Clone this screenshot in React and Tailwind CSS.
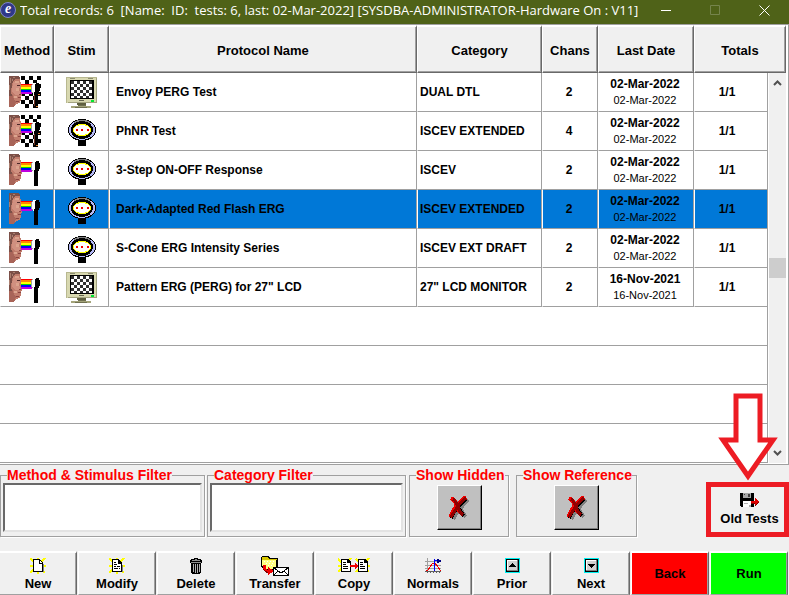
import { useState } from 'react';
import clsx from 'clsx';

const tests = [
	{ name: 'Envoy PERG Test', category: 'DUAL DTL', chans: 2, date: '02-Mar-2022', method: 'pattern', stim: 'monitor' },
	{ name: 'PhNR Test', category: 'ISCEV EXTENDED', chans: 4, date: '02-Mar-2022', method: 'pattern', stim: 'ganzfeld' },
	{ name: '3-Step ON-OFF Response', category: 'ISCEV', chans: 2, date: '02-Mar-2022', method: 'flash', stim: 'ganzfeld' },
	{ name: 'Dark-Adapted Red Flash ERG', category: 'ISCEV EXTENDED', chans: 2, date: '02-Mar-2022', method: 'flash', stim: 'ganzfeld' },
	{ name: 'S-Cone ERG Intensity Series', category: 'ISCEV EXT DRAFT', chans: 2, date: '02-Mar-2022', method: 'flash', stim: 'ganzfeld' },
	{ name: 'Pattern ERG (PERG) for 27" LCD', category: '27" LCD MONITOR', chans: 2, date: '16-Nov-2021', method: 'flash', stim: 'monitor' },
];

const emptyRows = [ 0, 1, 2, 3 ];
const rainbow = [ '#ff0000', '#ff8800', '#ffff00', '#00d800', '#0000ff', '#c000e0' ];

// Black squares of a checkerboard as one path.
function checks( x0, y0, cols, rows, size ) {
	let d = '';
	for ( let r = 0; r < rows; r++ ) {
		for ( let c = 0; c < cols; c++ ) {
			if ( ( r + c ) % 2 === 0 ) d += `M${ x0 + c * size } ${ y0 + r * size }h${ size }v${ size }h-${ size }z`;
		}
	}
	return d;
}

function MethodIcon( { type } ) {
	return (
		<svg width="33" height="32" viewBox="0 0 33 32" shapeRendering="crispEdges" role="img" aria-label={ type }>
			{ type === 'pattern' && (
				<>
					<path d="M8 0h24v32H8z" fill="#fff" />
					<path d={ checks( 12, 0, 5, 8, 4 ) } fill="#000" />
				</>
			) }
			<path d="M0 0h10l1 3 1 5v5l1 4v2l-1 1v4l-1 3-4 1-2 3H0z" fill="#c07c6c" />
			<path d="M4 6h6l1 2v4H7v3h4v4H6l-3-4z" fill="#d09080" />
			<path d="M6 5h4v2H6zM7 12h3v3H7zM5 20h3v2H5z" fill="#dca48e" />
			<path d="M0 18h3l2 5 2 3-2 5H0z" fill="#a86458" />
			<path d="M0 0h9l2 2v1H7L4 5 3 9l-1 6 1 5H0z" fill="#7c5048" />
			<path d="M1 2h1v5H1zM4 1h2v1H4zM0 9h1v5H0zM3 3h1v2H3z" fill="#ac8070" />
			<path d="M8 9h3v1H8z" fill="#4c2828" />
			<path d="M9 21h3v1H9zM7 25h3v1H7zM10 18h2v1h-2z" fill="#8c4440" />
			{ rainbow.map( ( color, i ) => (
				<path key={ color } d={ `M12 ${ 8 + Math.floor( i * 1.7 ) }h11v2H12z` } fill={ color } />
			) ) }
			<path d="M25 7h4l1 1 1 2v4l-1 2-1 1v15h-4z" fill="#000" />
			<path d="M22 9l2-2h3l-1 3v4l-1 4h-1l-2-2z" fill="#fff" />
			<path d="M22 9h1v7h-1zM23 8h1v1h-1zM23 16h1v1h-1z" fill="#a0a0a0" />
			{ type === 'pattern' && <path d="M29 18h2v1h-2zM27 30h2v1h-2z" fill="#e08030" /> }
			{ type === 'pattern' && <path d="M25 19h1v11h-1z" fill="#703020" /> }
		</svg>
	);
}

function MonitorIcon() {
	return (
		<svg width="31" height="31" viewBox="0 0 31 31" shapeRendering="crispEdges" role="img" aria-label="monitor">
			<path d="M0 0h31v26H0z" fill="#d8d8b0" />
			<path d="M0 0h31v1H1v25H0z" fill="#b8b890" />
			<path d="M30 1h1v25H2v-1h28z" fill="#a4a480" />
			<path d="M4 1h5v1H4zM22 1h5v1h-5z" fill="#8c8c70" />
			<path d="M4 3h24v19H4z" fill="#000" />
			<path d="M5 4h22v17H5z" fill="#fff" />
			<path d={ checks( 5, 4, 7, 6, 3 ) } fill="#303030" />
			<path d="M26 3h2v19H4v-1h22z" fill="#000" />
			<path d="M13 23h5v1h-5z" fill="#666650" />
			<path d="M25 23h3v2h-3z" fill="#00e830" />
			<path d="M11 26h9v2h-9z" fill="#606040" />
			<path d="M13 28h6v1h-6zM5 29h20v2H5z" fill="#a4a47a" />
			<path d="M12 28h8v1h-8zM9 30h12v1H9z" fill="#707050" />
		</svg>
	);
}

function GanzfeldIcon() {
	return (
		<svg width="28" height="28" viewBox="0 0 28 28" shapeRendering="crispEdges" role="img" aria-label="ganzfeld">
			<path d="M10 21h8v7h-8z" fill="#000" />
			<ellipse cx="14" cy="12" rx="14" ry="11" fill="#000" />
			<ellipse cx="14" cy="12" rx="13" ry="10" fill="#b4b8f4" />
			<path d="M6 4l4-2h8l4 2v1H6z" fill="#808080" />
			<ellipse cx="14" cy="12" rx="11" ry="9" fill="#000" />
			<ellipse cx="14" cy="12" rx="9" ry="6" fill="#ffff00" />
			<ellipse cx="14" cy="12" rx="8" ry="5" fill="#fff" />
			<path d="M8 11h2v2H8zM13 11h2v2h-2zM19 11h2v2h-2z" fill="#f00000" />
		</svg>
	);
}

function NewIcon() {
	return (
		<svg width="16" height="16" viewBox="0 0 16 16" shapeRendering="crispEdges">
			<path d="M0 0l15 15M15 0L0 15M0 8h16M8 0v16" stroke="#ffff00" strokeWidth="2" />
			<path d="M5 14h9V6h-1v7H5z" fill="#808080" />
			<path d="M3 1h7l3 4v9H3z" fill="#000" />
			<path d="M4 2h5v4h3v7H4z" fill="#fff" />
			<path d="M10 3v2h2z" fill="#fff" />
		</svg>
	);
}

function ModifyIcon() {
	return (
		<svg width="16" height="16" viewBox="0 0 16 16" shapeRendering="crispEdges">
			<path d="M0 0l15 15M15 0L0 15M0 8h16M8 0v16" stroke="#ffff00" strokeWidth="2" />
			<path d="M3 1h7l3 4v9H3z" fill="#000" />
			<path d="M4 2h5v4h3v7H4z" fill="#fff" />
			<path d="M5 4h2v1H5zM5 6h3v1H5zM5 8h2v1H5zM8 8h3v1H8zM5 10h4v1H5zM10 10h1v1h-1z" fill="#000" />
			<path d="M5 14h9V7h-1v7z" fill="#808080" />
		</svg>
	);
}

function DeleteIcon() {
	return (
		<svg width="14" height="16" viewBox="0 0 14 16" shapeRendering="crispEdges">
			<path d="M5 0h4v1h3v1h1v3h-1v10h-1v1H3v-1H2V5H1V2h1V1h3z" fill="#000" />
			<path d="M3 2h8v1H3zM2 4h10v1H2zM6 1h2v1H6z" fill="#909090" />
			<path d="M4 6h1v8H4zM6 6h1v9H6zM8 6h1v9H8zM10 6h1v8h-1z" fill="#b0b0b0" />
		</svg>
	);
}

function TransferIcon() {
	return (
		<svg width="28" height="20" viewBox="0 0 28 20" shapeRendering="crispEdges">
			<path d="M1 0h6l2 2h8v12H3L0 11V1z" fill="#000" />
			<path d="M1 1h5l2 2h8v1H1z" fill="#d8c800" />
			<path d="M1 4h14v9H4l-3-3z" fill="#ffff80" />
			<path d="M3 5h1v1H3zM6 5h1v1H6zM9 5h1v1H9zM12 5h1v1h-1zM5 7h1v1H5zM8 7h1v1H8zM11 7h1v1h-1zM7 9h1v1H7zM10 9h1v1h-1z" fill="#fff" />
			<path d="M2 9h3v4l2 1V11l6 4-6 4v-3l-3-1-2-3z" fill="#f00000" />
			<path d="M2 12v2l3 3h2v-1l-3-1z" fill="#800000" />
			<path d="M12 11h16v9H12z" fill="#000" />
			<path d="M13 12h14v7H13z" fill="#fff" />
			<path d="M13 12l7 5 7-5M13 19l4-4M27 19l-4-4" stroke="#000" fill="none" />
		</svg>
	);
}

function CopyIcon() {
	return (
		<svg width="32" height="16" viewBox="0 0 32 16" shapeRendering="crispEdges">
			<path d="M0 1l13 13M13 0L0 14M0 8h12M18 1l13 13M31 0L18 14M20 8h12" stroke="#ffff00" strokeWidth="2" />
			<path d="M3 1h7l3 3v10H3zM20 1h7l3 3v10H20z" fill="#000" />
			<path d="M4 2h5v3h3v8H4zM21 2h5v3h3v8h-8z" fill="#fff" />
			<path d="M5 4h3v1H5zM5 6h3v1H5zM5 8h5v1H5zM5 10h5v1H5zM22 4h3v1h-3zM22 6h3v1h-3zM22 8h5v1h-5zM22 10h5v1h-5z" fill="#000" />
			<path d="M12 7h5V5l4 3-4 3V9h-5z" fill="#f00000" />
		</svg>
	);
}

function NormalsIcon() {
	return (
		<svg width="17" height="16" viewBox="0 0 17 16" shapeRendering="crispEdges">
			<path d="M2 0h1v14H2zM0 3h16v1H0zM0 7h16v1H0zM0 10h16v1H0z" fill="#a0a0a0" />
			<path d="M0 13h16v1H0zM2 14h1v1H2zM5 14h1v1H5zM8 14h1v1H8zM11 14h1v1h-1zM14 14h1v1h-1z" fill="#606060" />
			<path d="M1 12h2l2-3 3-4h2l3 4 2 3h1" stroke="#f00000" strokeWidth="1" fill="none" />
			<path d="M9 1h1v12H9zM9 2h3v1H9z" fill="#0000ff" />
			<path d="M12 1h2v1h2v2h-2v1h-2z" fill="#000080" />
		</svg>
	);
}

function StepIcon( { down } ) {
	return (
		<svg width="15" height="15" viewBox="0 0 15 15" shapeRendering="crispEdges">
			<path d="M0 0h15v15H0z" fill="#00f0f0" />
			<path d="M1 1h13v13H1z" fill="#000" />
			<path d="M2 2h11v11H2z" fill="#808080" />
			<path d="M2 2h10v10H2z" fill="#fff" />
			<path d="M3 3h9v9H3z" fill="#d0d0d0" />
			<path d={ down ? 'M4 6h7v1h-1v1H9v1H8v1H7V9H6V8H5V7H4z' : 'M7 5h1v1h1v1h1v1h1v1H4V8h1V7h1V6h1z' } fill="#000" />
		</svg>
	);
}

function DiskIcon() {
	return (
		<svg width="19" height="14" viewBox="0 0 19 14" shapeRendering="crispEdges">
			<path d="M0 0h14v14H1l-1-1z" fill="#000" />
			<path d="M3 0h8v5H3z" fill="#a8a8a8" />
			<path d="M8 1h2v3H8zM4 1h1v1H4z" fill="#404040" />
			<path d="M3 8h8v6H3z" fill="#fff" />
			<path d="M4 10h4v1H4zM9 12h2v2H9z" fill="#b0b0b0" />
			<path d="M11 8h4V5l4 4-4 4v-3h-4z" fill="#e00000" />
			<path d="M11 10h4v1h-4zM15 12l3-3h1l-4 4z" fill="#800000" />
		</svg>
	);
}

function CrossIcon() {
	return (
		<svg width="22" height="25" viewBox="0 0 22 25" shapeRendering="crispEdges" fill="none" strokeLinejoin="round">
			<path d="M6 5q4 3 6 8t6 9M20 5q-7 7-10 11t-5 8" stroke="#808080" strokeWidth="4" />
			<path d="M4 4q4 3 6 8t6 9M18 4q-7 6-10 10t-5 9" stroke="#000" strokeWidth="4" />
			<path d="M3 3q4 2 6 8t6 9M18 2q-8 6-11 11t-5 9" stroke="#f00000" strokeWidth="4" />
			<path d="M5 4q3 2 5 8t5 8M18 3q-7 6-10 11t-5 8" stroke="#900000" strokeWidth="3" />
		</svg>
	);
}

function Chevron( { down } ) {
	return (
		<svg width="9" height="6" viewBox="0 0 9 6" fill="none" stroke="#505050" strokeWidth="2">
			<path d={ down ? 'M1 1l3.500 3.500L8 1' : 'M1 5l3.500-3.500L8 5' } />
		</svg>
	);
}

function TitleBar() {
	return (
		<header className="flex h-6 items-center bg-[#4f6218] pb-1 text-white">
			<span className="flex h-4 w-4 shrink-0 items-center justify-center rounded-full border border-[#8088c8] bg-[#303888] pb-0.5 font-['Liberation_Serif',serif] text-sm leading-none font-bold italic">e</span>
			<h1 className="ml-1 flex-1 truncate whitespace-pre font-['Open_Sans',sans-serif] text-[13px] leading-5">
				{ 'Total records: 6  [Name:  ID:  tests: 6, last: 02-Mar-2022] [SYSDBA-ADMINISTRATOR-Hardware On : V11]' }
			</h1>
			<button aria-label="Minimize" className="flex h-5 w-[49px] items-center justify-center">
				<svg width="11" height="11" viewBox="0 0 11 11" stroke="#fff"><path d="M0 5.500h10" /></svg>
			</button>
			<button aria-label="Maximize" disabled className="flex h-5 w-[49px] items-center justify-center">
				<svg width="11" height="11" viewBox="0 0 11 11" fill="none" stroke="#75844c"><path d="M.5.5h9v9h-9z" /></svg>
			</button>
			<button aria-label="Close" className="flex h-5 w-[49px] items-center justify-center">
				<svg width="11" height="11" viewBox="0 0 11 11" stroke="#fff"><path d="M.5.5l10 10M10.500.5l-10 10" /></svg>
			</button>
		</header>
	);
}

function HeadCell( { children, colSpan } ) {
	return (
		<th colSpan={ colSpan } className="h-12 border-t-2 border-r border-b border-l border-t-white border-r-[#696969] border-b-[#696969] border-l-white bg-[#f0f0f0] p-0 pt-0.5 text-[13px] shadow-[inset_-1px_-1px_0_#a0a0a0]">
			{ children }
		</th>
	);
}

function Cell( { children, className } ) {
	return (
		<td className={ clsx( 'h-[39px] border-r border-b border-l border-r-[#a0a0a0] border-b-[#a0a0a0] border-l-white p-0 pb-px', className ) }>
			{ children }
		</td>
	);
}

function TestTable() {
	const [ selected, setSelected ] = useState( 3 );

	return (
		<div className="border-t border-r border-b border-[#a0a0a0] bg-white pr-0.5 pb-px">
			<table className="w-full table-fixed border-separate border-spacing-0 text-xs leading-4 font-bold">
				<colgroup>
					<col className="w-[54px]" />
					<col className="w-[55px]" />
					<col />
					<col className="w-[125px]" />
					<col className="w-14" />
					<col className="w-24" />
					<col className="w-[74px]" />
					<col className="w-[18px]" />
				</colgroup>
				<thead>
					<tr>
						<HeadCell>Method</HeadCell>
						<HeadCell>Stim</HeadCell>
						<HeadCell>Protocol Name</HeadCell>
						<HeadCell>Category</HeadCell>
						<HeadCell>Chans</HeadCell>
						<HeadCell>Last Date</HeadCell>
						<HeadCell colSpan={ 2 }>Totals</HeadCell>
					</tr>
				</thead>
				<tbody>
					{ tests.map( ( test, i ) => (
						<tr key={ test.name } onClick={ () => setSelected( i ) } className={ clsx( i === selected && 'bg-[#0078d7]' ) }>
							<Cell className="pl-2"><MethodIcon type={ test.method } /></Cell>
							<Cell>
								<div className="flex justify-center pt-0.5">
									{ test.stim === 'monitor' ? <MonitorIcon /> : <GanzfeldIcon /> }
								</div>
							</Cell>
							<Cell className="pl-1.5">{ test.name }</Cell>
							<Cell className="pl-0.5">{ test.category }</Cell>
							<Cell className="pr-0.5 text-center">{ test.chans }</Cell>
							<Cell className="pr-0.5 text-center">
								<div>{ test.date }</div>
								<div className="text-[11px] font-normal">{ test.date }</div>
							</Cell>
							<Cell className="pr-2 text-center">1/1</Cell>
							{ i === 0 && (
								<td rowSpan={ tests.length + emptyRows.length } className="h-px bg-white p-0 pl-px">
									<div className="flex h-full flex-col items-center justify-between bg-[#f0f0f0]">
										<span className="flex h-5 items-center"><Chevron /></span>
										<span className="h-5 w-full bg-[#cdcdcd]" />
										<span className="flex h-5 items-center"><Chevron down /></span>
									</div>
								</td>
							) }
						</tr>
					) ) }
					{ emptyRows.map( ( row ) => (
						<tr key={ row }>
							<td colSpan={ 7 } className="h-[39px] border-r border-b border-[#a0a0a0] p-0" />
						</tr>
					) ) }
				</tbody>
			</table>
		</div>
	);
}

function Group( { title, className, children } ) {
	return (
		<fieldset className={ clsx( 'h-[70px] min-w-0 border border-[#a0a0a0] px-0.5 shadow-[1px_1px_0_#fff]', className ) }>
			<legend className="ml-1 text-sm leading-4 font-bold whitespace-nowrap text-[#ff0000]">{ title }</legend>
			{ children }
		</fieldset>
	);
}

function FilterBox( { label } ) {
	return (
		<textarea
			aria-label={ label }
			className="block h-[49px] w-full resize-none border-2 border-t-[#696969] border-r-[#e3e3e3] border-b-[#e3e3e3] border-l-[#696969] bg-white p-1 text-xs outline-none"
		/>
	);
}

function ToggleButton( { label } ) {
	const [ on, setOn ] = useState( false );

	return (
		<button
			aria-label={ label }
			aria-pressed={ on }
			onClick={ () => setOn( ! on ) }
			className="mx-auto mt-0.5 flex h-[45px] w-[45px] items-center justify-center border border-t-white border-r-black border-b-black border-l-white bg-[#c0c0c0] shadow-[inset_-1px_-1px_0_#808080]"
		>
			{ ! on && <CrossIcon /> }
		</button>
	);
}

function OldTests() {
	return (
		<div className="relative ml-auto">
			<svg className="absolute right-[11px] bottom-full" width="60" height="89" viewBox="0 0 60 89">
				<path d="M18 3h24v44h13L30 83 5 47h13z" fill="#fff" stroke="#ed1c24" strokeWidth="5" />
			</svg>
			<button className="flex h-[55px] w-[83px] flex-col items-center justify-center gap-1 border-[5px] border-[#ed1c24] pl-1 text-[13px] leading-4 font-bold whitespace-nowrap">
				<DiskIcon />
				Old Tests
			</button>
		</div>
	);
}

function ToolButton( { icon, label, color = 'bg-[#f0f0f0]' } ) {
	return (
		<button className={ clsx( 'flex h-11 min-w-0 flex-1 flex-col items-center justify-center border-t-2 border-r border-b border-l border-t-white border-r-[#696969] border-b-[#a0a0a0] border-l-white text-[13px] leading-4 font-bold shadow-[inset_-1px_0_0_#a0a0a0]', color ) }>
			{ icon && <span className="flex h-5 items-center">{ icon }</span> }
			{ label }
		</button>
	);
}

export default function App() {
	return (
		<div className="flex min-h-screen flex-col overflow-x-hidden bg-[#f0f0f0] font-['Liberation_Sans',Arial,sans-serif] text-black">
			<TitleBar />
			<TestTable />
			<div className="flex items-end pt-0.5 pb-3.5">
				<Group title="Method &amp; Stimulus Filter" className="mr-0.5 w-[205px]"><FilterBox label="Method &amp; Stimulus Filter" /></Group>
				<Group title="Category Filter" className="mr-[3px] w-[199px]"><FilterBox label="Category Filter" /></Group>
				<Group title="Show Hidden" className="mr-[7px] w-[100px]"><ToggleButton label="Show Hidden" /></Group>
				<Group title="Show Reference" className="w-[121px]"><ToggleButton label="Show Reference" /></Group>
				<OldTests />
			</div>
			<div className="mt-auto -ml-px flex gap-px pr-px">
				<ToolButton icon={ <NewIcon /> } label="New" />
				<ToolButton icon={ <ModifyIcon /> } label="Modify" />
				<ToolButton icon={ <DeleteIcon /> } label="Delete" />
				<ToolButton icon={ <TransferIcon /> } label="Transfer" />
				<ToolButton icon={ <CopyIcon /> } label="Copy" />
				<ToolButton icon={ <NormalsIcon /> } label="Normals" />
				<ToolButton icon={ <StepIcon /> } label="Prior" />
				<ToolButton icon={ <StepIcon down /> } label="Next" />
				<ToolButton label="Back" color="bg-[#ff0000]" />
				<ToolButton label="Run" color="bg-[#00ff00]" />
			</div>
		</div>
	);
}
